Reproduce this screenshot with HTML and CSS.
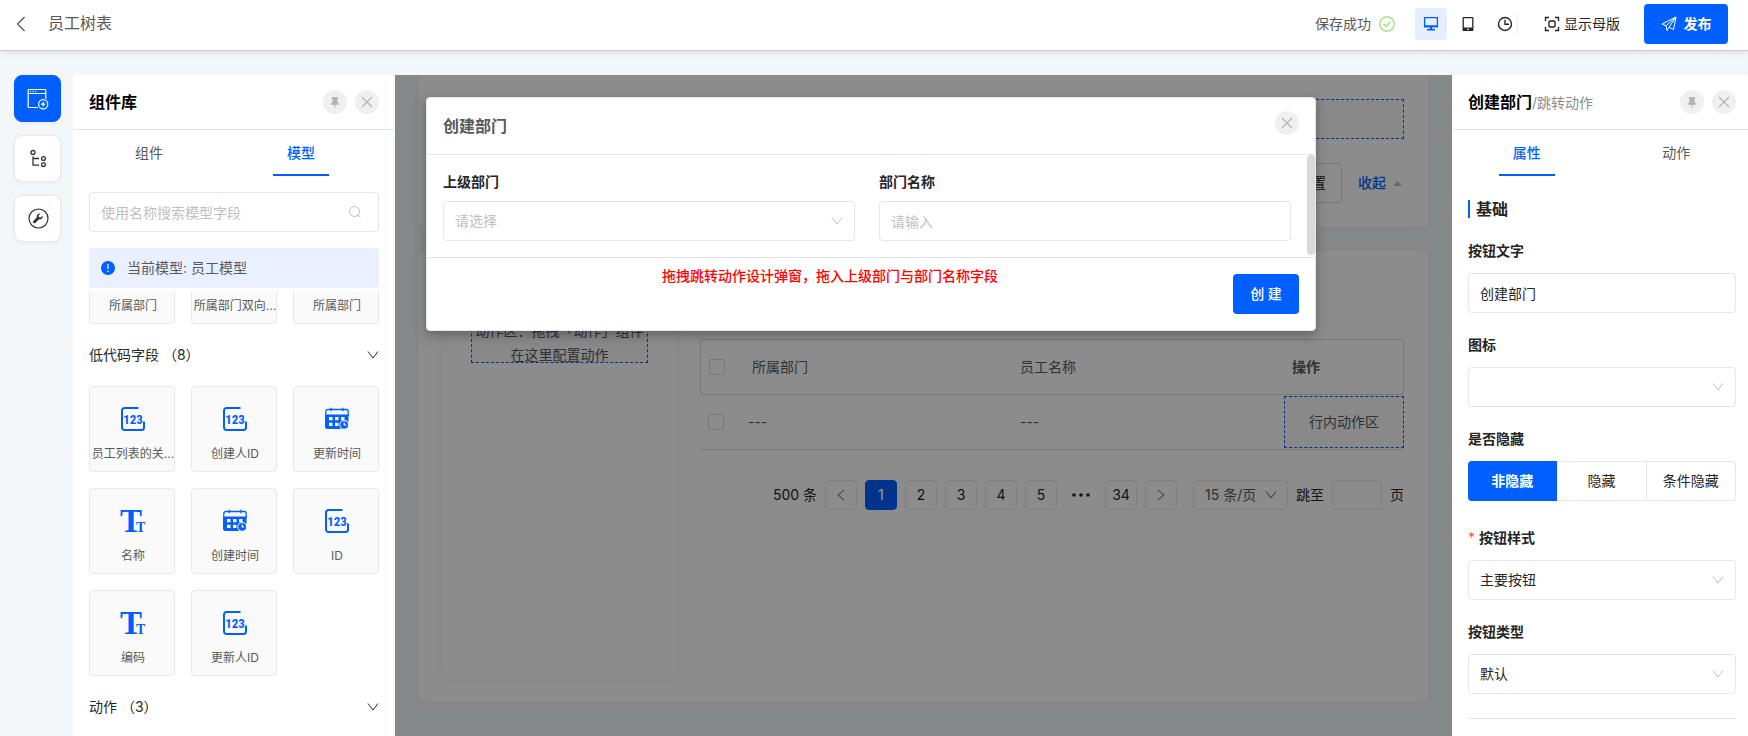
FILE: index.html
```html
<!DOCTYPE html>
<html lang="zh-CN">
<head>
<meta charset="utf-8">
<meta name="viewport" content="width=device-width, initial-scale=1">
<title>员工树表</title>
<link rel="stylesheet" href="styles.css">
</head>
<body>
<svg class="sprite" aria-hidden="true">
  <symbol id="i-down" viewBox="0 0 12 12"><path d="M1 2.5l5 6.5 5-6.5" fill="none" stroke="currentColor"/></symbol>
  <symbol id="i-close" viewBox="0 0 24 24"><path d="M7 7l10 10M17 7L7 17" fill="none" stroke="currentColor" stroke-width="1.2"/></symbol>
  <symbol id="i-pin" viewBox="0 0 24 24"><path d="M8.800 7h6.400v1.500l-.7.500v3.300c1 .4 1.600 1.100 1.600 2.500h-3.500l-.3 3.400h-.6l-.3-3.400H7.900c0-1.400.6-2.100 1.600-2.500V9l-.7-.5z" fill="currentColor"/></symbol>
  <symbol id="i-frame" viewBox="0 0 24 24"><path d="M17.500 1H3.500A2.500 2.500 0 0 0 1 3.500v17A2.500 2.500 0 0 0 3.500 23h17a2.500 2.500 0 0 0 2.500-2.500V14.500" fill="none" stroke="currentColor" stroke-width="2"/></symbol>
  <symbol id="i-cal" viewBox="0 0 24 24">
    <path d="M.8 9V4.500a2 2 0 0 1 2-2h18.400a2 2 0 0 1 2 2V9M6.200.8v3.400M17.800.8v3.400" fill="none" stroke="currentColor" stroke-width="1.300"/>
    <path d="M0 7.500h23.500V15H17l-2 4 1 3H2.500A2.500 2.500 0 0 1 0 19.500z" fill="currentColor"/>
    <path d="M4 10h3.500v3.300H4zM10 10h3.500v3.300H10zM16 10h3.500v3.300H16zM4 15.800h3.500v3.300H4zM10 15.800h3.500v3.300H10z" fill="#fafafa"/>
    <circle cx="19.200" cy="17.800" r="4.800" fill="#fafafa"/><circle cx="19.200" cy="17.800" r="3.900" fill="currentColor"/>
    <path d="M19.200 15.500v2.500h2.200" fill="none" stroke="#fafafa" stroke-width="1.200"/>
  </symbol>
</svg>

<header class="topbar">
  <button class="plain back" aria-label="返回"><svg width="10" height="16" viewBox="0 0 10 16"><path d="M8.500 1L1.500 8l7 7" fill="none" stroke="currentColor" stroke-width="1.300"/></svg></button>
  <h1 class="page-title">员工树表</h1>
  <span class="saved">保存成功
    <svg width="16" height="16" viewBox="0 0 16 16" fill="none" stroke="currentColor" stroke-width="1.200"><circle cx="8" cy="8" r="7.200"/><path d="M4.600 8l2.600 2.700 4.200-5"/></svg>
  </span>
  <div class="devices">
    <button class="plain device active" aria-label="桌面端"><svg width="16" height="16" viewBox="0 0 16 16"><path d="M1.600 1.600h12.800v9H1.600z" fill="none" stroke="currentColor" stroke-width="1.300"/><path d="M1 9.200h14v2.100H1zM6.800 11h2.400v2.200H6.800zM4 13h8v1.600H4z" fill="currentColor"/></svg></button>
    <button class="plain device" aria-label="平板端"><svg width="16" height="16" viewBox="0 0 16 16"><rect x="3.200" y="1.600" width="9.600" height="12.800" rx=".6" fill="none" stroke="currentColor" stroke-width="1.300"/><path d="M3 11.500h10V15H3z" fill="currentColor"/><path d="M7 13.200h2" stroke="#fff"/></svg></button>
    <button class="plain device" aria-label="历史记录"><svg width="16" height="16" viewBox="0 0 16 16" fill="none" stroke="currentColor" stroke-width="1.400"><circle cx="8" cy="8" r="6.500"/><path d="M8 3.800V8.200h4"/></svg></button>
  </div>
  <button class="plain master"><svg width="16" height="16" viewBox="0 0 16 16" fill="none" stroke="currentColor" stroke-width="1.400"><path d="M1.500 5V1.500H5M11 1.500h3.500V5M14.500 11v3.500H11M5 14.500H1.500V11"/><rect x="5" y="5" width="6" height="6" rx="1"/></svg>显示母版</button>
  <button class="primary publish"><svg width="16" height="16" viewBox="0 0 16 16" fill="none" stroke="currentColor" stroke-linejoin="round"><path d="M15 1L1 8l4 1.800L15 1l-2.500 12.500-4.500-2.200L6 14.500l-1-4.700M15 1L8 11.300"/></svg>发布</button>
</header>

<div class="workspace">
  <nav class="rail" aria-label="工具">
    <button class="rail-btn on" aria-label="组件库"><svg width="24" height="24" viewBox="0 0 24 24" fill="none" stroke="currentColor" stroke-width="1.200"><path d="M12 20.500H3a.8.800 0 0 1-.8-.8V3.300a.8.800 0 0 1 .8-.8h16a.8.800 0 0 1 .8.800V12M2.200 6.500h17.600M4 4.500h1.200M6.500 4.500h1.200M9 4.500h1.200"/><circle cx="17.200" cy="17.200" r="4.600"/><path d="M17.200 15v4.400M15 17.200h4.400"/></svg></button>
    <button class="rail-btn" aria-label="大纲树"><svg width="24" height="24" viewBox="0 0 24 24" fill="none" stroke="currentColor" stroke-width="1.300"><circle cx="7" cy="5.500" r="2"/><circle cx="17.500" cy="11.500" r="1.900"/><circle cx="17.500" cy="17.600" r="1.900"/><path d="M7 9.500v8.600h6M7 11.500h6"/></svg></button>
    <button class="rail-btn" aria-label="工具设置"><svg width="24" height="24" viewBox="0 0 24 24"><circle cx="12.500" cy="11.500" r="9.500" fill="none" stroke="currentColor" stroke-width="1.200"/><path d="M16.600 8.700l-2 1.900-1.600-.4-.4-1.600 2-2c-2.300-.5-4.300 1.400-3.700 3.700L7.400 14c-1.200 1.300.7 3.100 1.900 1.900l3.700-3.600c2.200.6 4.200-1.300 3.600-3.600z" fill="currentColor"/></svg></button>
  </nav>

  <aside class="panel library">
    <div class="panel-head">
      <h2 class="panel-title">组件库</h2>
      <button class="round" aria-label="固定"><svg width="24" height="24"><use href="#i-pin"/></svg></button>
      <button class="round" aria-label="关闭"><svg width="24" height="24"><use href="#i-close"/></svg></button>
    </div>
    <div class="tabs library-tabs" role="tablist">
      <button class="tab" role="tab">组件</button>
      <button class="tab on" role="tab" aria-selected="true">模型</button>
    </div>
    <div class="library-body">
      <label class="field search">
        <input type="text" placeholder="使用名称搜索模型字段" aria-label="搜索模型字段">
        <svg width="14" height="14" viewBox="0 0 14 14" fill="none" stroke="currentColor"><circle cx="6.500" cy="6.500" r="5"/><path d="M10 10l2.500 2.500"/></svg>
      </label>
      <div class="alert">
        <svg width="14" height="14" viewBox="0 0 14 14"><circle cx="7" cy="7" r="7" fill="#005fff"/><path d="M7 3v5M7 9.500V11" stroke="#fff" stroke-width="1.200"/></svg>
        当前模型: 员工模型
      </div>
      <div class="tile-list">
        <div class="tiles scrolled">
          <div class="tile"><svg width="24" height="24"><use href="#i-frame"/></svg>所属部门</div>
          <div class="tile"><svg width="24" height="24"><use href="#i-frame"/></svg>所属部门双向...</div>
          <div class="tile"><svg width="24" height="24"><use href="#i-frame"/></svg>所属部门</div>
        </div>
        <button class="plain group">低代码字段 （8）<svg width="12" height="12"><use href="#i-down"/></svg></button>
        <div class="tiles">
          <div class="tile"><svg width="24" height="24"><use href="#i-frame"/><text class="num-glyph" x="12" y="17" text-anchor="middle">123</text></svg>员工列表的关...</div>
          <div class="tile"><svg width="24" height="24"><use href="#i-frame"/><text class="num-glyph" x="12" y="17" text-anchor="middle">123</text></svg>创建人ID</div>
          <div class="tile"><svg width="24" height="24"><use href="#i-cal"/></svg>更新时间</div>
          <div class="tile"><svg width="24" height="24"><text class="t-big" x="-1" y="23">T</text><text class="t-small" x="15" y="23">T</text></svg>名称</div>
          <div class="tile"><svg width="24" height="24"><use href="#i-cal"/></svg>创建时间</div>
          <div class="tile"><svg width="24" height="24"><use href="#i-frame"/><text class="num-glyph" x="12" y="17" text-anchor="middle">123</text></svg>ID</div>
          <div class="tile"><svg width="24" height="24"><text class="t-big" x="-1" y="23">T</text><text class="t-small" x="15" y="23">T</text></svg>编码</div>
          <div class="tile"><svg width="24" height="24"><use href="#i-frame"/><text class="num-glyph" x="12" y="17" text-anchor="middle">123</text></svg>更新人ID</div>
        </div>
        <button class="plain group">动作 （3）<svg width="12" height="12"><use href="#i-down"/></svg></button>
      </div>
    </div>
  </aside>

  <main class="canvas">
    <div class="stage">
      <section class="card filter">
        <div class="drop-zone"></div>
        <div class="filter-actions">
          <button class="outline">重 置</button>
          <a class="fold" href="#">收起<svg width="9" height="5" viewBox="0 0 9 5"><path d="M4.500 0L9 5H0z" fill="#bfbfbf"/></svg></a>
        </div>
      </section>
      <section class="card content">
        <div class="tree"><div class="drop-zone tree-drop"><span>动作区：拖拽「动作」组件在这里配置动作</span></div></div>
        <div class="listing">
          <table class="grid">
            <colgroup><col class="c-check"><col class="c-dept"><col><col class="c-ops"></colgroup>
            <thead><tr><th><input type="checkbox" aria-label="全选"></th><th>所属部门</th><th>员工名称</th><th class="ops-head">操作</th></tr></thead>
            <tbody><tr><td><input type="checkbox" aria-label="选择行"></td><td class="dept">---</td><td>---</td><td class="ops"><div class="drop-zone row-drop">行内动作区</div></td></tr></tbody>
          </table>
          <nav class="pager" aria-label="分页">
            <span>500 条</span>
            <button class="page arrow" aria-label="上一页"><svg width="8" height="12" viewBox="0 0 8 12"><path d="M7 1L1 6l6 5" fill="none" stroke="currentColor"/></svg></button>
            <button class="page current">1</button><button class="page">2</button><button class="page">3</button><button class="page">4</button><button class="page">5</button>
            <span class="dots"><svg width="18" height="4" viewBox="0 0 18 4" fill="currentColor"><circle cx="2" cy="2" r="1.800"/><circle cx="9" cy="2" r="1.800"/><circle cx="16" cy="2" r="1.800"/></svg></span>
            <button class="page">34</button>
            <button class="page arrow" aria-label="下一页"><svg width="8" height="12" viewBox="0 0 8 12"><path d="M1 1l6 5-6 5" fill="none" stroke="currentColor"/></svg></button>
            <span class="field size"><select aria-label="每页条数"><option>15 条/页</option></select><svg width="12" height="12"><use href="#i-down"/></svg></span>
            <label class="jump">跳至<input type="text">页</label>
          </nav>
        </div>
      </section>
    </div>

    <div class="mask">
      <div class="modal" role="dialog" aria-labelledby="modal-title">
        <div class="modal-head">
          <h2 class="modal-title" id="modal-title">创建部门</h2>
          <button class="round" aria-label="关闭"><svg width="24" height="24"><use href="#i-close"/></svg></button>
        </div>
        <div class="modal-body">
          <div class="form-item">
            <label for="parent">上级部门</label>
            <span class="field empty"><select id="parent"><option>请选择</option></select><svg width="12" height="12"><use href="#i-down"/></svg></span>
          </div>
          <div class="form-item">
            <label for="dept-name">部门名称</label>
            <span class="field"><input id="dept-name" type="text" placeholder="请输入"></span>
          </div>
          <span class="scroll-thumb"></span>
        </div>
        <div class="modal-foot">
          <p class="note">拖拽跳转动作设计弹窗，拖入上级部门与部门名称字段</p>
          <button class="primary create">创 建</button>
        </div>
      </div>
    </div>
  </main>

  <aside class="panel props">
    <div class="panel-head">
      <h2 class="panel-title">创建部门<small>/跳转动作</small></h2>
      <button class="round" aria-label="固定"><svg width="24" height="24"><use href="#i-pin"/></svg></button>
      <button class="round" aria-label="关闭"><svg width="24" height="24"><use href="#i-close"/></svg></button>
    </div>
    <div class="tabs props-tabs" role="tablist">
      <button class="tab on" role="tab" aria-selected="true">属性</button>
      <button class="tab" role="tab">动作</button>
    </div>
    <div class="props-body">
      <h3 class="section">基础</h3>
      <div class="prop">
        <label for="p-text">按钮文字</label>
        <span class="field"><input id="p-text" type="text" value="创建部门"></span>
      </div>
      <div class="prop">
        <label for="p-icon">图标</label>
        <span class="field"><select id="p-icon"><option></option></select><svg width="12" height="12"><use href="#i-down"/></svg></span>
      </div>
      <div class="prop hide-prop">
        <span class="prop-label">是否隐藏</span>
        <div class="segments">
          <button class="segment on">非隐藏</button><button class="segment">隐藏</button><button class="segment">条件隐藏</button>
        </div>
      </div>
      <div class="prop">
        <label for="p-style"><span class="star">*</span>按钮样式</label>
        <span class="field"><select id="p-style"><option>主要按钮</option></select><svg width="12" height="12"><use href="#i-down"/></svg></span>
      </div>
      <div class="prop">
        <label for="p-type">按钮类型</label>
        <span class="field"><select id="p-type"><option>默认</option></select><svg width="12" height="12"><use href="#i-down"/></svg></span>
      </div>
      <hr class="rule">
    </div>
  </aside>
</div>
</body>
</html>
```
FILE: styles.css
```css
:root {
  --primary: #005fff;
  --line: #e3e7ee;
  --ink: #262626;
  --text: #595959;
  --hint: #bfbfbf;
}

* { box-sizing: border-box; }

body {
  margin: 0;
  height: 100vh;
  display: flex;
  flex-direction: column;
  overflow: hidden;
  background: #f3f7fa;
  color: var(--text);
  font: 14px/22px Inter, "Noto Sans CJK SC", sans-serif;
}

button, input, select { font: inherit; color: inherit; margin: 0; }
button { cursor: pointer; padding: 0; }
h1, h2, h3, p { margin: 0; }
svg { display: block; flex: none; }
.sprite { position: absolute; width: 0; height: 0; }
.plain { border: 0; background: none; }

/* top bar */
.topbar {
  position: relative;
  z-index: 1;
  flex: none;
  display: flex;
  align-items: center;
  height: 51px;
  padding: 0 20px 2px 16px;
  background: #fff;
  border-bottom: 1px solid #c9cccf;
  box-shadow: 0 1px 6px rgba(0, 20, 40, .12);
}
.back { width: 10px; margin-right: 22px; }
.page-title { flex: 1; padding-bottom: 2px; font-size: 16px; font-weight: 400; }
.saved { display: flex; align-items: center; gap: 8px; margin-right: 20px; }
.saved svg { color: #95de64; }
.devices {
  display: flex;
  align-items: center;
  gap: 5px;
  margin-right: 26px;
  color: var(--ink);
}
.device { display: grid; place-items: center; width: 32px; height: 32px; border-radius: 4px; }
.device.active { background: #e5eeff; color: var(--primary); }
.master { display: flex; align-items: center; gap: 4px; margin-right: 24px; color: var(--ink); }
.devices::after { content: ""; width: 1px; height: 20px; margin-left: -9px; background: #eee; }
.primary {
  height: 40px;
  border: 0;
  border-radius: 4px;
  background: var(--primary);
  color: #fff;
  font-weight: 500;
}
.publish { display: flex; align-items: center; justify-content: center; gap: 7px; width: 84px; font-weight: 600; }

/* workspace */
.workspace { flex: 1; min-height: 0; display: flex; padding-top: 24px; }
.rail { flex: none; display: flex; flex-direction: column; gap: 13px; width: 73px; padding: 0 12px 0 14px; }
.rail-btn {
  display: grid;
  place-items: center;
  width: 47px;
  height: 47px;
  border: 1px solid #e6e9f0;
  border-radius: 8px;
  background: #fff;
  color: #333;
  box-shadow: 0 1px 4px rgba(0, 20, 60, .05);
}
.rail-btn.on { background: var(--primary); border-color: var(--primary); color: #fff; }

.panel { flex: none; display: flex; flex-direction: column; min-height: 0; overflow: hidden; background: #fff; border-radius: 4px 4px 0 0; }
.library { width: 322px; }
.props { width: 296px; }
.panel-head {
  flex: none;
  display: flex;
  align-items: center;
  gap: 8px;
  height: 55px;
  padding: 0 16px;
  border-bottom: 1px solid var(--line);
}
.props .panel-head { padding-right: 12px; }
.panel-title { flex: 1; color: #000; font-size: 16px; font-weight: 600; }
.panel-title small { color: #8c8c8c; font-size: 14px; font-weight: 400; }
.round {
  flex: none;
  width: 24px;
  height: 24px;
  border: 0;
  border-radius: 50%;
  background: #f0f0f0;
  color: #b4b4b4;
}

.tabs { flex: none; display: flex; height: 46px; }
.library-tabs { margin-right: 18px; }
.props-tabs { margin-right: -3px; }
.tab {
  flex: 1;
  display: flex;
  flex-direction: column;
  align-items: center;
  justify-content: space-between;
  padding-top: 12px;
  border: 0;
  background: none;
}
.tab.on { color: var(--primary); font-weight: 500; }
.tab.on::after { content: ""; width: 56px; height: 2px; background: var(--primary); }

/* fields */
.field { position: relative; display: block; color: var(--ink); }
.field input, .field select {
  appearance: none;
  display: block;
  width: 100%;
  height: 40px;
  padding: 0 11px;
  border: 1px solid var(--line);
  border-radius: 4px;
  background: #fff;
  outline: 0;
}
.field input::placeholder { color: var(--hint); }
.field svg { position: absolute; right: 12px; top: 50%; margin-top: -6px; color: var(--hint); pointer-events: none; }
.field.empty select { color: var(--hint); }
.field.search svg { right: 17px; margin-top: -7px; }

/* component library */
.library-body { flex: 1; min-height: 0; display: flex; flex-direction: column; padding: 16px 16px 0; }
.alert {
  flex: none;
  display: flex;
  align-items: center;
  gap: 12px;
  height: 40px;
  margin: 16px 0 4px;
  padding: 0 12px;
  border-radius: 4px;
  background: #e9f0ff;
}
.tile-list { flex: 1; min-height: 0; overflow: hidden; }
.tiles { display: grid; grid-template-columns: repeat(3, minmax(0, 1fr)); gap: 16px; }
.tiles.scrolled { margin-top: -54px; }
.tile {
  display: flex;
  flex-direction: column;
  align-items: center;
  gap: 13px;
  height: 86px;
  padding: 20px 0 0 2px;
  border: 1px solid var(--line);
  border-radius: 4px;
  background: #fafafa;
  font-size: 12px;
  line-height: 20px;
  white-space: nowrap;
}
.tile svg { color: var(--primary); overflow: visible; }
.num-glyph { font: bold 13px "Liberation Sans Narrow", "Roboto Condensed", sans-serif; fill: currentColor; }
.t-big { font: bold 33px "Liberation Serif", serif; fill: currentColor; }
.t-small { font: bold 14px "Liberation Serif", serif; fill: currentColor; }
.group {
  display: flex;
  align-items: center;
  justify-content: space-between;
  width: 100%;
  height: 62px;
  color: var(--ink);
}

/* canvas */
.canvas { position: relative; flex: 1; min-width: 0; overflow: hidden; }
.stage { display: flex; flex-direction: column; gap: 24px; padding: 0 24px; }
.card { border-radius: 4px; background: #fff; box-shadow: 0 0 12px rgba(0, 0, 0, .04); padding: 24px; }
.drop-zone {
  display: flex;
  align-items: center;
  justify-content: center;
  height: 40px;
  border: 1px dashed var(--primary);
  background: #fafafa;
}
.filter-actions { display: flex; justify-content: flex-end; align-items: center; gap: 16px; margin-top: 24px; }
.outline { height: 40px; padding: 0 15px; border: 1px solid #d9d9d9; border-radius: 4px; background: #fff; color: var(--ink); }
.fold { display: flex; align-items: center; gap: 7px; padding-right: 2px; color: var(--primary); text-decoration: none; font-weight: 500; }
.content { display: flex; gap: 24px; height: 450px; }
.tree { flex: none; width: 233px; padding: 48px 28px 0; border-radius: 4px; box-shadow: 0 0 8px rgba(0, 0, 0, .06); }
.tree-drop { line-height: 24px; text-align: center; }
.listing { flex: 1; min-width: 0; padding-top: 64px; }

.grid { width: 100%; table-layout: fixed; border-collapse: separate; border-spacing: 0; }
.c-check { width: 48px; }
.c-dept { width: 272px; }
.c-ops { width: 120px; }
.grid th, .grid td { padding: 0; text-align: left; font-weight: 400; border-bottom: 1px solid #d9d9d9; }
.grid th { height: 56px; padding-left: 4px; border-top: 1px solid #d9d9d9; }
.grid th:nth-child(3) { padding-left: 0; }
.grid th:first-child { padding-left: 8px; border-left: 1px solid #d9d9d9; border-radius: 4px 0 0 4px; }
.grid th:last-child { padding-left: 8px; border-right: 1px solid #d9d9d9; border-radius: 0 4px 4px 0; }
.grid td:first-child { padding-left: 8px; }
.grid .ops-head { font-weight: 600; }
.grid input {
  appearance: none;
  display: block;
  width: 16px;
  height: 16px;
  margin: 0;
  border: 1px solid #d9d9d9;
  border-radius: 2px;
  background: #fff;
}
.grid .ops { padding: 1px 0; }
.row-drop { height: 52px; }

.pager { display: flex; justify-content: flex-end; align-items: center; gap: 8px; margin-top: 30px; color: var(--ink); }
.page {
  display: grid;
  place-items: center;
  width: 32px;
  height: 30px;
  border: 1px solid var(--line);
  border-radius: 4px;
  background: #fff;
}
.page.arrow { color: var(--text); }
.page.current { border-color: var(--primary); background: var(--primary); color: #fff; font-weight: 500; }
.dots { display: grid; place-items: center; width: 32px; }
.field.size { width: 95px; margin-left: 8px; color: var(--text); }
.field.size select { height: 30px; }
.field.size svg { right: 11px; color: var(--text); }
.jump { display: flex; align-items: center; gap: 8px; }
.jump input { width: 50px; height: 30px; border: 1px solid var(--line); border-radius: 4px; background: #fff; }

/* modal */
.mask { position: absolute; inset: 0; padding: 22px 136px 0 31px; background: rgba(0, 0, 0, .45); }
.modal { border: 1px solid var(--line); border-radius: 4px; background: #fff; box-shadow: 0 4px 12px rgba(0, 0, 0, .3); }
.modal-head { display: flex; align-items: flex-start; justify-content: space-between; height: 57px; padding: 13px 16px; border-bottom: 1px solid var(--line); }
.modal-title { padding-top: 4px; font-size: 16px; font-weight: 600; }
.modal-body { position: relative; display: flex; gap: 24px; padding: 16px 24px 16px 16px; border-bottom: 1px solid var(--line); }
.form-item { flex: 1; display: flex; flex-direction: column; gap: 8px; }
.form-item label, .prop label, .prop-label { color: var(--ink); font-weight: 600; }
.scroll-thumb { position: absolute; right: 0; top: 0; width: 8px; height: 100px; border-radius: 4px; background: #d9d9d9; }
.modal-foot { display: flex; align-items: flex-start; gap: 16px; padding: 8px 16px 16px; }
.note { flex: 1; color: #f00; line-height: 20px; font-weight: 500; text-align: center; }
.create { width: 66px; margin-top: 8px; }

/* properties */
.props-body { padding: 24px 12px 0 16px; }
.section { padding-left: 6px; border-left: 2px solid var(--primary); color: var(--ink); font-size: 16px; line-height: 18px; font-weight: 600; margin-bottom: 22px; }
.prop { display: flex; flex-direction: column; gap: 11px; margin-bottom: 21px; }
.hide-prop { margin-bottom: 26px; }
.star { margin-right: 4px; color: #ff4d4f; font-weight: 400; }
.segments { display: flex; }
.segment { flex: 1; height: 40px; border: 1px solid var(--line); border-left-width: 0; background: #fff; color: var(--ink); }
.segment.on { border-color: var(--primary); border-radius: 4px 0 0 4px; background: var(--primary); color: #fff; font-weight: 600; }
.segment:last-child { border-radius: 0 4px 4px 0; }
.rule { margin: 24px 0 0; border: 0; border-top: 1px solid #e8e8e8; }
```
